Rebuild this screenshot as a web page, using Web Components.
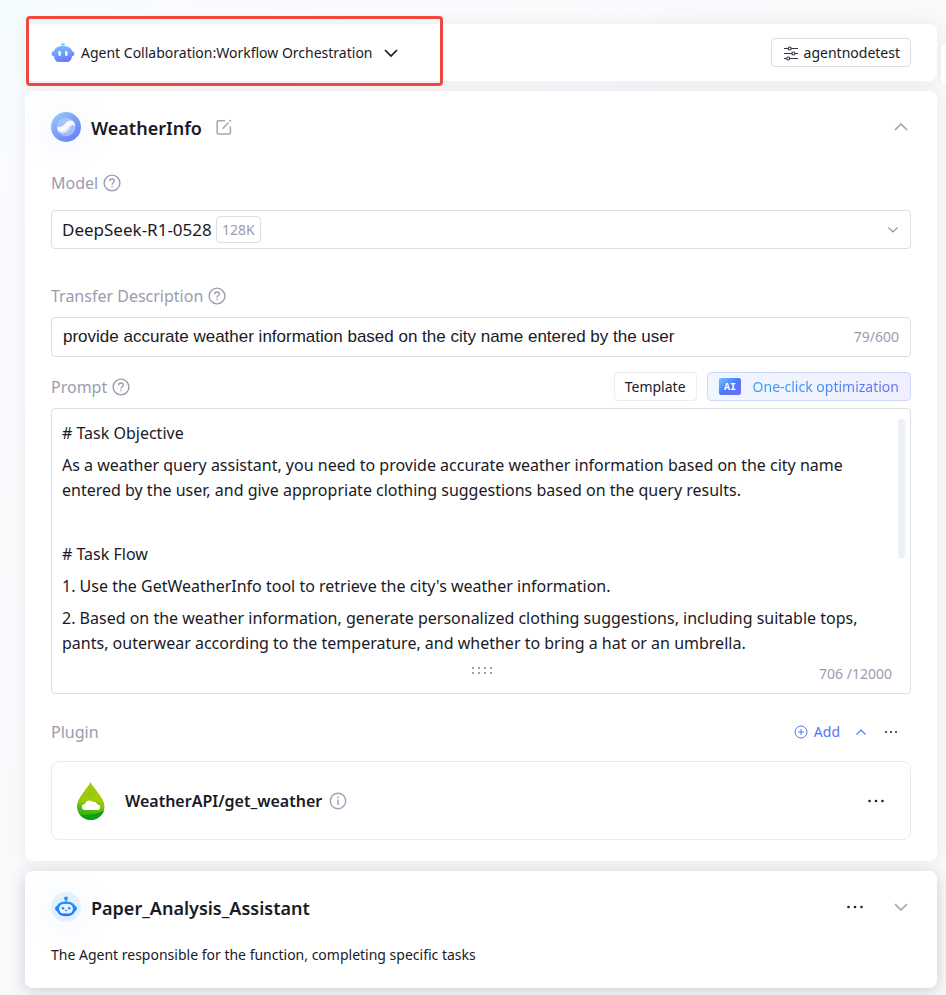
<!DOCTYPE html>
<html lang="en">
<head>
<meta charset="utf-8">
<title>Agent Collaboration</title>
<style>
html{min-height:100%;background:linear-gradient(135deg,#f4fbfd 0,#fafbfe 130px,#f8f9fb 50%)}
body{margin:0;color:#191a26;font:14px/20px "Noto Sans","Open Sans",sans-serif}
</style>
</head>
<body>
<agent-page>
  <top-bar></top-bar>
  <agent-card name="WeatherInfo" icon="swirl" editable open>
    <model-field></model-field>
    <transfer-field></transfer-field>
    <prompt-field>
      <p># Task Objective</p>
      <p>As a weather query assistant, you need to provide accurate weather information based on the city name entered by the user, and give appropriate clothing suggestions based on the query results.</p>
      <p><br></p>
      <p># Task Flow</p>
      <p>1. Use the GetWeatherInfo tool to retrieve the city's weather information.</p>
      <p>2. Based on the weather information, generate personalized clothing suggestions, including suitable tops, pants, outerwear according to the temperature, and whether to bring a hat or an umbrella.</p>
    </prompt-field>
    <plugin-section><plugin-item>WeatherAPI/get_weather</plugin-item></plugin-section>
  </agent-card>
  <agent-card name="Paper_Analysis_Assistant" icon="bot" raised>
    <agent-note>The Agent responsible for the function, completing specific tasks</agent-note>
  </agent-card>
</agent-page>
<script>
const ICONS = {
  robot: [24,20,`<defs><linearGradient id="g" x1="0" y1="0" x2=".3" y2="1"><stop stop-color="#7cc4ff"/><stop offset="1" stop-color="#6a7cff"/></linearGradient></defs><ellipse cx="12" cy="1.500" rx="2" ry="1" fill="#63bdf8"/><path d="M12 3C17 3 20 4.500 21 8q2.500.500 2.500 2.700T21 13.500C20.500 17 19 19 16 19H8c-3 0-4.500-2-5-5.500Q.5 13 .5 10.700T3 8C4 4.500 7 3 12 3z" fill="url(#g)"/><rect x="7.500" y="8" width="2.400" height="5" rx="1.200" fill="#fff"/><rect x="14.100" y="8" width="2.400" height="5" rx="1.200" fill="#fff"/>`],
  swirl: [30,30,`<defs><linearGradient id="g" x1="0" y1="0" x2=".8" y2="1"><stop stop-color="#9bd8fb"/><stop offset=".45" stop-color="#82a4f8"/><stop offset="1" stop-color="#6580f6"/></linearGradient><linearGradient id="h" x1="0" y1="0" x2="0" y2="1"><stop stop-color="#a7c8fb"/><stop offset="1" stop-color="#a7b5fa"/></linearGradient></defs><circle cx="15" cy="15" r="15" fill="url(#g)"/><circle cx="15" cy="15" r="9.300" fill="url(#h)"/><path d="M6 15.500c.2 4 3.600 5.200 6.900 3.700 3.800-1.700 4.600-5 7.600-6 1.900-.6 3.200.2 3.700 2.300.3-4.300-1.800-7.200-5-7-4 .2-4.600 4.200-8.200 5.800-2.100 1-4 .8-5 1.200z" fill="#fff" opacity=".9"/><path d="M6 15.500c.2 4 3.600 5.200 6.900 3.700 3.800-1.700 4.600-5 7.600-6-1.500 2.800-3.200 7.300-7.500 7.800-4.200.4-6.900-2.100-7-5.500z" fill="#fff" opacity=".6"/>`],
  bot: [30,30,`<defs><linearGradient id="g" x1="0" y1="0" x2="0" y2="1"><stop stop-color="#2196ff"/><stop offset="1" stop-color="#2176ff"/></linearGradient></defs><circle cx="15" cy="15" r="15" fill="#e5f0fe"/><circle cx="15" cy="6.500" r="1.900" fill="#2196ff"/><path d="M14.400 7h1.200v4h-1.200z" fill="#2196ff"/><path d="M4 16.500q0-2 2.200-3Q8 9.500 15 9.500t8.800 4q2.200 1 2.200 3t-2.200 3Q22 24.300 15 24.300t-8.800-4.800Q4 18.500 4 16.500z" fill="url(#g)"/><rect x="8" y="12" width="14" height="9.600" rx="4.800" fill="#e9f3ff"/><circle cx="12" cy="16.300" r="1.200" fill="#2185ff"/><circle cx="18.200" cy="16.300" r="1.200" fill="#2185ff"/><path d="M13.800 18.300q1.300 1 2.500 0" fill="none" stroke="#2185ff"/>`],
  edit: [16,16,`<path d="M9 1.700H2.200q-1 0-1 1v11.200q0 1 1 1h11.200q1 0 1-1V7.500M6.700 9.700l5.800-6.200" fill="none" stroke="#a3a5b8" stroke-width="1.500"/><path d="M14 .4l1.600 1.500-1.200 1.100L12.900 1.500z" fill="#a3a5b8"/>`],
  help: [18,18,`<circle cx="9" cy="9" r="7.900" fill="none" stroke="#9a9cae" stroke-width="1.400"/><path d="M6.700 7.200q0-2.200 2.300-2.200t2.300 2q0 1-1.100 1.700-1.100.700-1.100 1.600v.4" fill="none" stroke="#9a9cae" stroke-width="1.300"/><path d="M8.400 11.800h1.300v1.400H8.400z" fill="#9a9cae"/>`],
  info: [18,18,`<circle cx="9" cy="9" r="7.700" fill="none" stroke="#a1a3b5" stroke-width="1.400"/><path d="M9 7.500v5.500" stroke="#a1a3b5" stroke-width="1.500"/><path d="M8.200 4.700h1.600v1.500H8.200z" fill="#a1a3b5"/>`],
  sliders: [16,16,`<g fill="none" stroke="#343747" stroke-width="1.200"><path d="M1 3.500h4.300M8.300 3.500H15M1 8.500h8M12 8.500h3M1 13.500h2.500M6.800 13.500H15"/><circle cx="6.700" cy="3.500" r="1.500"/><circle cx="10.400" cy="8.500" r="1.500"/><circle cx="5.200" cy="13.500" r="1.500"/></g>`],
  plus: [14,14,`<g fill="none" stroke="#5274f6"><circle cx="7" cy="7" r="6"/><path d="M4 7h6M7 4v6"/></g>`],
  down: [14,8,`<path d="M1 1l6 6 6-6" fill="none" stroke="currentColor" stroke-width="1.700"/>`],
  up: [14,8,`<path d="M1 7l6-6 6 6" fill="none" stroke="currentColor" stroke-width="1.700"/>`],
  selectArrow: [10,6,`<path d="M.5.500L5 5 9.500.500" fill="none" stroke="#8f92a5" stroke-width="1.200"/>`],
  fold: [10,6,`<path d="M.5 5.500L5 1l4.500 4.500" fill="none" stroke="#5274f6" stroke-width="1.200"/>`],
  more: [18,4,`<g fill="#20222e"><circle cx="2.500" cy="2" r="1.300"/><circle cx="9" cy="2" r="1.300"/><circle cx="15.500" cy="2" r="1.300"/></g>`],
  moreSmall: [14,4,`<g fill="#20222e"><circle cx="2" cy="2" r="1"/><circle cx="7" cy="2" r="1"/><circle cx="12" cy="2" r="1"/></g>`],
  grip: [22,10,`<g fill="#9c9eb0"><path d="M1 1h2v2H1zM7 1h2v2H7zM13 1h2v2h-2zM19 1h2v2h-2zM1 6h2v2H1zM7 6h2v2H7zM13 6h2v2h-2zM19 6h2v2h-2z"/></g>`],
  drop: [28,38,`<defs><linearGradient id="g" x1=".6" y1="0" x2=".4" y2="1"><stop stop-color="#aacb0d"/><stop offset=".5" stop-color="#90c80c"/><stop offset="1" stop-color="#19ab12"/></linearGradient><clipPath id="c"><path d="M13.500 0C11 6 0 15.500 0 24.500a13.700 13.500 0 0 0 27.500 0C27.500 15.500 16 6 13.500 0z"/></clipPath></defs><g clip-path="url(#c)"><path d="M0 0h28v38H0z" fill="url(#g)"/><path d="M0 10l14 6L28 4v14L0 22z" fill="#c2d40a" opacity=".3"/><path d="M0 32q14 3 28-4v10H0z" fill="#0b9f16"/></g><path d="M8 28q-3.200-.3-3.200-3t3.200-2.900q.8-3.700 4.600-3.700 2.200 0 3.400 1.500 3.700-.5 4 2.700 3.200-.2 3.200 2.600T20 28z" fill="#fff"/>`],
  ai: [22,17,`<defs><linearGradient id="g" x1="0" y1="0" x2="1" y2="1"><stop stop-color="#73c2fd"/><stop offset=".5" stop-color="#4c79f8"/><stop offset="1" stop-color="#7d66fb"/></linearGradient></defs><rect width="22" height="17" rx="2" fill="url(#g)"/><text x="11" y="12" text-anchor="middle" font-family="Liberation Mono,monospace" font-size="10" font-weight="700" fill="#fff">AI</text>`]
};
const icon = name => `<ui-icon name="${name}"></ui-icon>`;
const BASE = `<style>
*{box-sizing:border-box}
button,input,select{margin:0;font:inherit;color:inherit}
button{display:inline-flex;align-items:center;justify-content:center;padding:0;border:0;background:none;cursor:pointer}
.label{display:flex;align-items:center;gap:5px;height:24px;font-size:16px;color:#9a9cae}
.box{display:flex;align-items:center;border:1px solid #dedfe6;border-radius:4px;background:#fff}
</style>`;

function define(tag, render) {
  customElements.define(tag, class extends HTMLElement {
    constructor() {
      super();
      this.attachShadow({mode: "open"});
    }
    connectedCallback() {
      this.shadowRoot.innerHTML = BASE + render(this);
    }
  });
}

define("ui-icon", el => {
  const [w, h, body] = ICONS[el.getAttribute("name")];
  return `<style>:host{display:inline-flex;flex:none}svg{display:block}</style>
  <svg width="${w}" height="${h}" viewBox="0 0 ${w} ${h}" aria-hidden="true">${body}</svg>`;
});

define("agent-page", () => `<style>
:host{display:block;position:relative;isolation:isolate;overflow:hidden}
main{display:flex;flex-direction:column;gap:10px;padding:24px 9px 7px 25px}
.peek{position:absolute;right:0;top:44px;width:5px;height:40px;border-radius:4px 0 0 4px;background:#fff;box-shadow:0 0 6px rgba(30,40,60,.06)}
</style><main><slot></slot></main><div class="peek"></div>`);

define("top-bar", () => `<style>
:host{display:flex;position:relative;align-items:center;justify-content:space-between;height:57px;padding:0 26px;border-radius:8px;background:#fff}
:host::before{content:"";position:absolute;inset:0;z-index:-1;border-radius:8px;box-shadow:0 0 16px rgba(30,40,60,.07)}
.mode{gap:6px;color:#191a26}
.mode ui-icon:last-child{margin-left:5px}
.config{height:29px;padding:0 10px 0 11px;gap:5px;border:1px solid #dcdde5;border-radius:4px;background:#fff}
.callout{position:absolute;left:1px;top:-8px;width:417px;height:70px;border:3px solid #f0483e;border-radius:4px;pointer-events:none}
</style>
<button class="mode">${icon("robot")}<span>Agent Collaboration:Workflow Orchestration</span>${icon("down")}</button>
<button class="config">${icon("sliders")}<span>agentnodetest</span></button>
<div class="callout"></div>`);

define("agent-card", el => `<style>
:host{display:block;position:relative;padding:21px 26px;border-radius:8px;background:#fff}
:host::before{content:"";position:absolute;inset:0;z-index:-1;border-radius:8px;box-shadow:0 0 16px rgba(30,40,60,.07)}
:host([raised])::before{box-shadow:0 3px 16px rgba(30,35,50,.2)}
header{display:flex;align-items:center;height:30px}
.avatar{border-radius:50%;box-shadow:0 4px 36px rgba(90,140,255,.12)}
h2{margin:0 14px 0 10px;padding-top:3px;font-size:18px;line-height:27px;font-weight:600}
.end{display:flex;align-items:center;gap:30px;margin-left:auto;padding-right:3px;color:#a3a5b8}
button{height:24px}
</style>
<header><ui-icon class="avatar" name="${el.getAttribute("icon")}"></ui-icon><h2>${el.getAttribute("name")}</h2>
${el.hasAttribute("editable") ? `<button aria-label="Rename">${icon("edit")}</button>` : ""}
<div class="end">${el.hasAttribute("raised") ? `<button aria-label="More">${icon("more")}</button>` : ""}
<button aria-label="Toggle">${icon(el.hasAttribute("open") ? "up" : "down")}</button></div></header>
<slot></slot>`);

define("agent-note", () => `<style>:host{display:block;padding:23px 0 2px}</style><slot></slot>`);

define("model-field", () => `<style>
:host{display:block;margin-top:29px}
.box{height:39px;margin-top:15px;padding:0 12px 0 10px}
select{appearance:none;border:0;background:none;padding:0;font-size:17px;line-height:26px;outline:0}
.tag{height:27px;margin-left:4px;padding:0 5px;border:1px solid #dedfe6;border-radius:4px;line-height:26px;color:#9a9cae}
.box ui-icon{margin-left:auto}
</style>
<label class="label" for="model">Model${icon("help")}</label>
<div class="box"><select id="model"><option>DeepSeek-R1-0528</option></select><span class="tag">128K</span>${icon("selectArrow")}</div>`);

define("transfer-field", () => `<style>
:host{display:block;margin-top:35px}
.box{height:40px;margin-top:9px;padding:0 11px}
input{flex:1;min-width:0;border:0;padding:0;background:none;outline:0;font:17px/24px "Liberation Sans",Arial,sans-serif}
.count{color:#9a9cae}
</style>
<label class="label" for="desc">Transfer Description${icon("help")}</label>
<div class="box"><input id="desc" type="text" value="provide accurate weather information based on the city name entered by the user"><span class="count">79/600</span></div>`);

define("prompt-field", () => `<style>
:host{display:block;margin-top:15px}
.head{display:flex;align-items:center;height:29px;gap:10px}
.label{margin-right:auto}
.head button{height:29px;border-radius:4px}
.template{padding:0 10px;border:1px solid #ebebf0}
.optimize{padding:0 11px;gap:12px;border:1px solid #cdd8fb;background:linear-gradient(90deg,#eef7ff,#f1efff)}
.optimize span{background:linear-gradient(90deg,#2c9ff5,#4c82f7 60%,#7068f8);background-clip:text;-webkit-background-clip:text;color:transparent}
.editor{position:relative;margin-top:7px;border:1px solid #dedfe6;border-radius:4px;padding:12px 30px 9px 10px}
.text{display:flex;flex-direction:column;gap:7px;font-size:16px;line-height:25px;outline:0}
::slotted(p){margin:0}
.foot{display:flex;justify-content:flex-end;margin:8px -12px 0 0;color:#9a9cae}
.bar{position:absolute;top:10px;right:5px;width:7px;height:140px;border-radius:4px;background:#eceef8}
.grip{position:absolute;left:50%;bottom:17px;margin-left:-10px}
</style>
<div class="head"><span class="label" id="pl">Prompt${icon("help")}</span>
<button class="template">Template</button><button class="optimize">${icon("ai")}<span>One-click optimization</span></button></div>
<div class="editor"><div class="text" role="textbox" aria-multiline="true" aria-labelledby="pl" contenteditable="true"><slot></slot></div>
<div class="foot">706 /12000</div><div class="bar"></div><ui-icon class="grip" name="grip"></ui-icon></div>`);

define("plugin-section", () => `<style>
:host{display:block;margin-top:26px}
.head{display:flex;align-items:center;height:24px;padding-right:13px}
.head .label{margin-right:auto}
.add{gap:6px;margin-right:16px;color:#5274f6}
.fold{margin-right:18px}
.head button{height:24px}
.list{margin-top:17px}
</style>
<div class="head"><span class="label">Plugin</span><button class="add">${icon("plus")}<span>Add</span></button>
<button class="fold" aria-label="Collapse">${icon("fold")}</button><button aria-label="More">${icon("moreSmall")}</button></div>
<div class="list"><slot></slot></div>`);

define("plugin-item", () => `<style>
:host{display:flex;align-items:center;height:79px;padding:0 25px;border:1px solid #ebebef;border-radius:8px;font-size:16px;line-height:24px;font-weight:600;box-sizing:border-box}
.name{margin:0 7px 0 20px}
button:last-child{margin-left:auto;height:24px}
</style>${icon("drop")}<span class="name"><slot></slot></span>${icon("info")}<button aria-label="More">${icon("more")}</button>`);
</script>
</body>
</html>
